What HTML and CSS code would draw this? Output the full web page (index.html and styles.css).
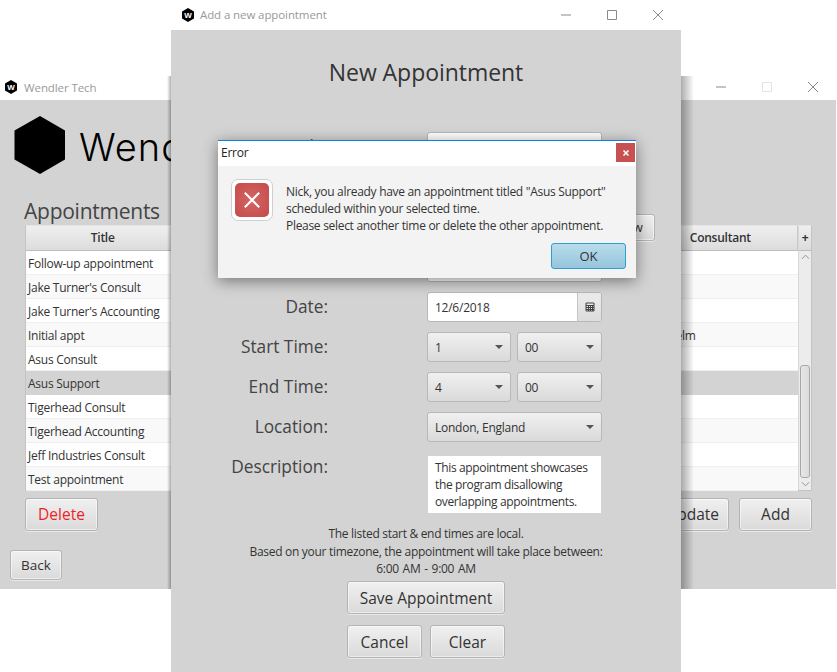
FILE: index.html
```html
<!DOCTYPE html>
<html lang="en">

<head>
  <meta charset="utf-8" />
  <title>Wendler Tech</title>
  <link rel="stylesheet" href="styles.css">
</head>

<body>
  <!-- main window, behind the other two -->
  <section class="window main-window">
    <header class="titlebar">
      <svg class="app-icon" viewBox="0 0 14 14"><polygon points="7,0 13,3.5 13,10.5 7,14 1,10.5 1,3.5" /><text x="7" y="10" text-anchor="middle">W</text></svg>
      <span class="win-title">Wendler Tech</span>
      <div class="win-controls">
        <svg viewBox="0 0 12 12"><path d="M1 6h10" /></svg>
        <svg class="disabled" viewBox="0 0 12 12"><path d="M1.5 1.5h9v9h-9z" /></svg>
        <svg viewBox="0 0 12 12"><path d="M1 1l10 10M11 1L1 11" /></svg>
      </div>
    </header>
    <div class="main-body">
      <div class="brand">
        <svg class="brand-logo" viewBox="0 0 52 58"><polygon points="26,0 51,14.5 51,43.5 26,58 0.5,43.5 0.5,14.5" /></svg>
        <span class="brand-name">Wendler Tech</span>
      </div>
      <h2 class="section-title">Appointments</h2>
      <div class="table">
        <div class="table-main">
          <!-- the middle columns are hidden by the form window -->
          <div class="table-row table-head">
            <div>Title</div><div></div><div></div><div></div><div>Consultant</div>
          </div>
          <div class="table-row"><div>Follow-up appointment</div></div>
          <div class="table-row"><div>Jake Turner's Consult</div></div>
          <div class="table-row"><div>Jake Turner's Accounting</div></div>
          <div class="table-row"><div>Initial appt</div><div></div><div></div><div></div><div class="consultant">Jo Helm</div></div>
          <div class="table-row"><div>Asus Consult</div></div>
          <div class="table-row selected"><div>Asus Support</div></div>
          <div class="table-row"><div>Tigerhead Consult</div></div>
          <div class="table-row"><div>Tigerhead Accounting</div></div>
          <div class="table-row"><div>Jeff Industries Consult</div></div>
          <div class="table-row"><div>Test appointment</div></div>
        </div>
        <div class="table-side">
          <div class="col-menu">+</div>
          <div class="scrollbar">
            <svg viewBox="0 0 10 6"><path d="M1 5l4-4 4 4" /></svg>
            <div class="scroll-thumb"></div>
            <svg viewBox="0 0 10 6"><path d="M1 1l4 4 4-4" /></svg>
          </div>
        </div>
      </div>
      <div class="table-actions">
        <button class="btn btn-danger btn-action">Delete</button>
        <div class="table-actions-right">
          <button class="btn btn-action">Update</button>
          <button class="btn btn-action">Add</button>
        </div>
      </div>
      <button class="btn btn-back">Back</button>
    </div>
  </section>

  <!-- add appointment window -->
  <section class="window form-window">
    <header class="titlebar titlebar-form">
      <svg class="app-icon" viewBox="0 0 14 14"><polygon points="7,0 13,3.5 13,10.5 7,14 1,10.5 1,3.5" /><text x="7" y="10" text-anchor="middle">W</text></svg>
      <span class="win-title">Add a new appointment</span>
      <div class="win-controls">
        <svg viewBox="0 0 12 12"><path d="M1 6h10" /></svg>
        <svg viewBox="0 0 12 12"><path d="M1.5 1.5h9v9h-9z" /></svg>
        <svg viewBox="0 0 12 12"><path d="M1 1l10 10M11 1L1 11" /></svg>
      </div>
    </header>
    <div class="form-body">
      <h1 class="form-title">New Appointment</h1>
      <div class="form-grid">
        <!-- first four labels sit behind the error dialog -->
        <label class="form-label">Title:</label>
        <div class="control input"></div>

        <span class="form-label"></span>
        <div class="control input"></div>

        <span class="form-label"></span>
        <div class="control-row">
          <div class="control input"></div>
          <button class="btn btn-view">View</button>
        </div>

        <span class="form-label"></span>
        <div class="control input"></div>

        <label class="form-label">Date:</label>
        <div class="control date-picker">
          <span class="date-value">12/6/2018</span>
          <span class="date-btn">
            <svg viewBox="0 0 10 10"><path d="M1 1h8v8h-8zM1 3.5h8M1 5.5h8M1 7.5h8M3.5 3.5v5.5M5.5 3.5v5.5M7.5 3.5v5.5" /></svg>
          </span>
        </div>

        <label class="form-label">Start Time:</label>
        <div class="time-pair">
          <div class="control combo"><span>1</span><i class="caret"></i></div>
          <div class="control combo"><span>00</span><i class="caret"></i></div>
        </div>

        <label class="form-label">End Time:</label>
        <div class="time-pair">
          <div class="control combo"><span>4</span><i class="caret"></i></div>
          <div class="control combo"><span>00</span><i class="caret"></i></div>
        </div>

        <label class="form-label">Location:</label>
        <div class="control combo combo-wide"><span>London, England</span><i class="caret"></i></div>

        <label class="form-label">Description:</label>
        <div class="textarea">This appointment showcases the program disallowing overlapping appointments.</div>
      </div>
      <div class="form-note">
        <p>The listed start &amp; end times are local.</p>
        <p>Based on your timezone, the appointment will take place between:</p>
        <p class="form-note-time">6:00 AM - 9:00 AM</p>
      </div>
      <button class="btn btn-save">Save Appointment</button>
      <div class="form-actions">
        <button class="btn btn-form">Cancel</button>
        <button class="btn btn-form">Clear</button>
      </div>
    </div>
  </section>

  <!-- error dialog -->
  <section class="dialog">
    <header class="dialog-bar">
      <span>Error</span>
      <span class="dialog-close">
        <svg viewBox="0 0 8 8"><path d="M1.5 1.5l5 5M6.5 1.5l-5 5" /></svg>
      </span>
    </header>
    <div class="dialog-body">
      <div class="error-icon">
        <div class="error-icon-inner">
          <svg viewBox="0 0 20 20"><path d="M2 2l16 16M18 2L2 18" /></svg>
        </div>
      </div>
      <div class="dialog-content">
        <p class="dialog-text">Nick, you already have an appointment titled "Asus Support"<br>scheduled within your selected time.<br>Please select another time or delete the other appointment.</p>
        <button class="btn-ok">OK</button>
      </div>
    </div>
  </section>
</body>

</html>
```

FILE: styles.css
```css
* {
  box-sizing: border-box;
}

html,
body {
  height: 100%;
}

body {
  margin: 0;
  background: #fff;
  overflow: hidden;
  color: #333;
  font: 12px "Open Sans", "Noto Sans", sans-serif;
  letter-spacing: -0.25px;
}

h1,
h2,
p {
  margin: 0;
  font-weight: normal;
}

/* windows sit on a free desktop */
.window {
  position: absolute;
  display: flex;
  flex-direction: column;
  background: #d3d3d3;
}

.main-window {
  left: 0;
  top: 76px;
  width: 836px;
  height: 513px;
}

/* shadow of the form window falls on the main window only */
.main-window::before,
.main-window::after {
  content: "";
  position: absolute;
  top: 0;
  bottom: 0;
}

.main-window::before {
  left: 167px;
  width: 4px;
  background: linear-gradient(90deg, rgba(0, 0, 0, 0), rgba(0, 0, 0, 0.3));
}

.main-window::after {
  left: 681px;
  width: 13px;
  background: linear-gradient(90deg, rgba(0, 0, 0, 0.32), rgba(0, 0, 0, 0));
}

.form-window {
  left: 171px;
  top: 0;
  width: 510px;
  height: 672px;
}

.titlebar {
  display: flex;
  align-items: center;
  flex: none;
  height: 24px;
  padding-left: 4px;
  padding-bottom: 2px;
  background: #fff;
}

.titlebar-form {
  height: 30px;
  padding-left: 10px;
  padding-bottom: 1px;
}

.app-icon {
  width: 14px;
  height: 14px;
  margin-right: 5px;
}

.titlebar:not(.titlebar-form) .app-icon {
  margin-right: 6px;
}

.app-icon polygon {
  fill: #000;
}

.app-icon text {
  fill: #fff;
  font: bold 8px "Liberation Sans", sans-serif;
}

.win-title {
  color: #999;
  font-size: 11.5px;
  letter-spacing: -0.1px;
}

.win-controls {
  display: flex;
  gap: 34px;
  margin-left: auto;
  margin-right: 17px;
}

.win-controls svg {
  width: 12px;
  height: 12px;
  fill: none;
  stroke: #8a8a8a;
  stroke-width: 1;
}

.win-controls .disabled {
  stroke: #e3e3e3;
}

/* main window */
.main-body {
  padding: 16px 24px 0 25px;
}

.brand {
  display: flex;
  align-items: center;
  gap: 13px;
  height: 58px;
  margin-left: -11px;
  white-space: nowrap;
}

.brand-logo {
  flex: none;
  width: 52px;
  height: 58px;
}

.brand-name {
  margin-top: 4px;
  color: #000;
  font: 300 38px Inter, Lato, sans-serif;
  letter-spacing: 1px;
}

.section-title {
  margin: 23px 0 0 -1px;
  height: 28px;
  color: #444;
  font-size: 21px;
  line-height: 28px;
}

.table {
  display: flex;
  width: 787px;
  height: 266px;
  background: #fff;
  border: 1px solid #c4c4c4;
  border-top-color: #e4e4e4;
}

.table-main {
  flex: 1;
  min-width: 0;
}

.table-row {
  display: grid;
  grid-template-columns: repeat(5, 1fr);
  height: 24px;
  align-items: center;
  padding: 1px 0 0 2px;
  border-bottom: 1px solid #efefef;
  color: #333;
  white-space: nowrap;
}

.table-row:nth-child(odd) {
  background: #f9f9f9;
}

.table-row:nth-child(even) {
  background: #fff;
}

.table-row.selected {
  background: #d3d3d3;
  border-bottom-color: #d3d3d3;
}

.table-head {
  height: 25px;
  padding: 0;
  background: linear-gradient(#efefef, #dcdcdc) !important;
  border-bottom: 1px solid #bdbdbd;
  font-weight: 600;
  text-align: center;
}

.table-head div {
  min-height: 24px;
  line-height: 24px;
  border-right: 1px solid #c8c8c8;
}

.consultant {
  padding-left: 10px;
}

.table-side {
  display: flex;
  flex-direction: column;
  flex: none;
  width: 13px;
  border-left: 1px solid #d8d8d8;
  background: #ececec;
}

.col-menu {
  height: 25px;
  color: #333;
  background: linear-gradient(#efefef, #dcdcdc);
  border-bottom: 1px solid #bdbdbd;
  font-weight: bold;
  line-height: 24px;
  text-align: center;
}

.scrollbar {
  display: flex;
  flex: 1;
  flex-direction: column;
  align-items: center;
  padding: 3px 0;
}

.scrollbar svg {
  flex: none;
  width: 9px;
  height: 6px;
  fill: none;
  stroke: #8a8a8a;
}

.scroll-thumb {
  width: 10px;
  height: 113px;
  margin-top: auto;
  margin-bottom: 3px;
  background: linear-gradient(90deg, #e6e6e6, #dcdcdc);
  border: 1px solid #a8a8a8;
  border-radius: 3px;
}

/* buttons */
.btn {
  padding: 0 0 1px;
  color: #333;
  background: linear-gradient(#f0f0f0, #dadada);
  border: 1px solid #b4b4b4;
  border-radius: 3px;
  box-shadow: inset 0 0 0 1px rgba(255, 255, 255, 0.5), 0 1px 0 rgba(255, 255, 255, 0.5);
  font-family: inherit;
  font-size: 15.5px;
}

.table-actions {
  display: flex;
  justify-content: space-between;
  width: 787px;
  margin-top: 7px;
}

.table-actions-right {
  display: flex;
  gap: 10px;
}

.btn-action {
  width: 73px;
  height: 33px;
}

.btn-danger {
  color: #f01e28;
}

.btn-back {
  display: block;
  width: 52px;
  height: 30px;
  margin: 19px 0 0 -15px;
  font-size: 13.5px;
}

/* form window */
.form-body {
  display: flex;
  flex: 1;
  flex-direction: column;
  align-items: center;
}

.form-title {
  margin-top: 27px;
  color: #333;
  font-size: 23px;
  letter-spacing: -0.05px;
  line-height: 30px;
}

.form-grid {
  display: grid;
  grid-template-columns: 157px 175px;
  grid-auto-rows: 30px;
  column-gap: 99px;
  row-gap: 10px;
  align-self: flex-start;
  margin-top: 45px;
}

.form-label {
  color: #444;
  font-size: 17.3px;
  letter-spacing: 0;
  line-height: 30px;
  text-align: right;
}

.control {
  height: 30px;
  border: 1px solid #b8b8b8;
  border-radius: 3px;
}

.input {
  background: #fff;
}

.control-row {
  display: flex;
  align-items: center;
}

.control-row .input {
  flex: none;
  width: 175px;
}

.btn-view {
  flex: none;
  width: 53px;
  height: 27px;
  font-size: 13px;
}

.date-picker {
  display: flex;
  align-items: center;
  background: #fff;
  overflow: hidden;
}

.date-value {
  flex: 1;
  padding-left: 7px;
}

.date-btn {
  display: flex;
  align-items: center;
  justify-content: center;
  align-self: stretch;
  width: 24px;
  background: linear-gradient(#ececec, #dcdcdc);
  border-left: 1px solid #c4c4c4;
}

.date-btn svg {
  width: 10px;
  height: 10px;
  fill: none;
  stroke: #444;
  stroke-width: 1;
}

.time-pair {
  display: grid;
  grid-template-columns: 84px 85px;
  gap: 6px;
}

.combo {
  display: flex;
  align-items: center;
  justify-content: space-between;
  padding: 0 7px;
  background: linear-gradient(#f0f0f0, #dadada);
}

.caret {
  width: 0;
  height: 0;
  border-top: 4px solid #555;
  border-left: 4px solid transparent;
  border-right: 4px solid transparent;
}

.textarea {
  grid-row: span 2;
  width: 173px;
  height: 57px;
  margin: 4px 0 0 1px;
  padding: 3px 6px 0 7px;
  background: #fff;
  letter-spacing: -0.36px;
  line-height: 17px;
}

.form-note {
  margin-top: 3px;
  letter-spacing: -0.3px;
  line-height: 17.5px;
  text-align: center;
}

.form-note-time {
  word-spacing: 1px;
}

.btn-save {
  width: 158px;
  height: 33px;
  margin-top: 3px;
  padding: 2px 0 0;
}

.form-actions {
  display: flex;
  gap: 8px;
  margin-top: 11px;
}

.btn-form {
  width: 75px;
  height: 33px;
  padding: 2px 0 0;
}

/* error dialog */
.dialog {
  position: absolute;
  left: 218px;
  top: 140px;
  width: 418px;
  height: 138px;
  display: flex;
  flex-direction: column;
  background: #f3f3f3;
  border-top: 1px solid #0a84e0;
  box-shadow: 0 3px 14px rgba(0, 0, 0, 0.45);
}

.dialog-bar {
  display: flex;
  align-items: flex-start;
  justify-content: space-between;
  flex: none;
  height: 25px;
  padding: 2px 1px 0 3px;
  background: #fff;
  color: #222;
  line-height: 20px;
}

.dialog-close {
  display: flex;
  align-items: center;
  justify-content: center;
  width: 19px;
  height: 19px;
  background: #c75050;
}

.dialog-close svg {
  width: 8px;
  height: 8px;
  fill: none;
  stroke: #fff;
  stroke-width: 1.6;
}

.dialog-body {
  display: flex;
  flex: 1;
  padding: 13px 10px 0 13px;
}

.error-icon {
  flex: none;
  width: 42px;
  height: 42px;
  padding: 3px;
  background: #fff;
  border: 1px solid #cfcfcf;
  border-radius: 7px;
}

.error-icon-inner {
  display: flex;
  align-items: center;
  justify-content: center;
  height: 100%;
  background: radial-gradient(circle, #d56565, #c44a4a);
  border-radius: 5px;
}

.error-icon-inner svg {
  width: 18px;
  height: 18px;
  fill: none;
  stroke: #fff;
  stroke-width: 2.2;
}

.dialog-content {
  display: flex;
  flex: 1;
  flex-direction: column;
  margin-left: 13px;
}

.dialog-text {
  margin-top: 4px;
  letter-spacing: -0.3px;
  line-height: 17px;
}

.btn-ok {
  align-self: flex-end;
  width: 75px;
  height: 26px;
  margin-top: 9px;
  padding: 0;
  color: #333;
  background: linear-gradient(#b8dcec, #96c5dc);
  border: 1px solid #2f9fd0;
  border-radius: 3px;
  font-family: inherit;
  font-size: 13px;
}
```
